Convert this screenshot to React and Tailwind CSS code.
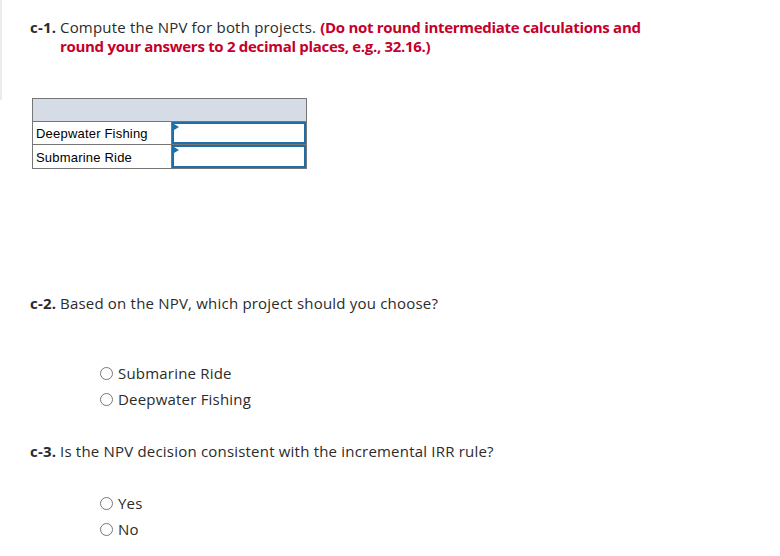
import React from 'react'

function Radio({ label }) {
  return (
    <label className="flex items-center h-[26px]">
      <span className="w-[13px] h-[13px] rounded-full border border-[#777] bg-white mr-[5px]" />
      <span>{label}</span>
    </label>
  )
}

function AnswerRow({ name, last }) {
  return (
    <div className={`flex h-[23px] ${last ? '' : 'border-b border-[#767676]'}`}>
      <div className="w-[139px] border-r border-[#767676] pl-[3px] pt-[2px] flex items-center text-[13px] text-black" style={{ fontFamily: '"Liberation Sans", Arial, sans-serif' }}>
        {name}
      </div>
      <div className="relative flex-1 border-2 border-[#1d6fa9] bg-white">
        <span className="absolute left-0 top-0 w-0 h-0 border-y-[3px] border-y-transparent border-l-[5px] border-l-[#1d6fa9]" />
      </div>
    </div>
  )
}

export default function App() {
  return (
    <div className="relative w-[780px] h-[556px] bg-white text-[15px] tracking-[0.2px] text-[#2b2b2b]" style={{ fontFamily: '"Open Sans", Lato, sans-serif' }}>
      <div className="absolute left-0 top-0 w-[2px] h-[100px] bg-[#ececec]" />
      <div className="pl-[30px] pt-[18px]">
        <div className="flex leading-[19px]">
          <span className="w-[30px] shrink-0 font-bold">c-1.</span>
          <p className="w-[600px]">
            Compute the NPV for both projects.{' '}
            <span className="font-bold text-[#c4002b] tracking-[-0.3px]">
              (Do not round intermediate calculations and round your answers to 2 decimal places, e.g., 32.16.)
            </span>
          </p>
        </div>

        <div className="mt-[42px] ml-[2px] w-[275px] border border-[#767676]">
          <div className="h-[23px] bg-[#d6dce5] border-b border-[#767676]" />
          <AnswerRow name="Deepwater Fishing" />
          <AnswerRow name="Submarine Ride" last />
        </div>

        <div className="mt-[125px] flex leading-[19px]">
          <span className="w-[30px] shrink-0 font-bold">c-2.</span>
          <p>Based on the NPV, which project should you choose?</p>
        </div>

        <div className="mt-[47px] pl-[70px]">
          <Radio label="Submarine Ride" />
          <Radio label="Deepwater Fishing" />
        </div>

        <div className="mt-[30px] flex leading-[19px]">
          <span className="w-[30px] shrink-0 font-bold">c-3.</span>
          <p>Is the NPV decision consistent with the incremental IRR rule?</p>
        </div>

        <div className="mt-[29px] pl-[70px]">
          <Radio label="Yes" />
          <Radio label="No" />
        </div>
      </div>
    </div>
  )
}
